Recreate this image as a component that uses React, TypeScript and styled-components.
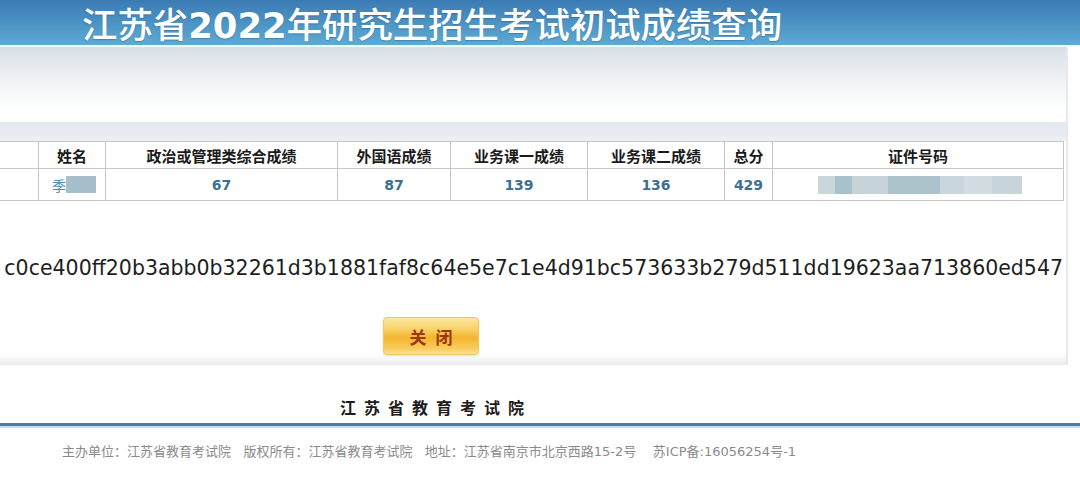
import React from 'react';
import styled, {createGlobalStyle} from 'styled-components';

const GlobalStyle = createGlobalStyle`
  html, body {
    margin: 0;
    padding: 0;
    background: #fff;
    overflow: hidden;
  }
  body {
    width: 1080px;
    font-family: "DejaVu Sans", "Noto Sans CJK SC", sans-serif;
  }
`

const headers = ['', '姓名', '政治或管理类综合成绩', '外国语成绩', '业务课一成绩', '业务课二成绩', '总分', '证件号码']
const widths = [68, 67, 232, 113, 137, 137, 48, 291]
const scores = ['67', '87', '139', '136', '429']

// blurred id number, pieces of different shades
const idBlur = [
    {w: 17, c: '#c9d7dd'},
    {w: 17, c: '#a9c1c8'},
    {w: 36, c: '#c6d4da'},
    {w: 52, c: '#abc3ca'},
    {w: 24, c: '#c9d7dc'},
    {w: 28, c: '#d2dde2'},
    {w: 30, c: '#c7d5da'},
]

const hash = 'c0ce400ff20b3abb0b32261d3b1881faf8c64e5e7c1e4d91bc573633b279d511dd19623aa713860ed547'

const App = () => {
    return (
        <Page>
            <GlobalStyle/>
            <Header>
                <Title>江苏省<Year>2022</Year>年研究生招生考试初试成绩查询</Title>
            </Header>

            <Panel>
                <TableArea>
                    <ScoreTable>
                        <colgroup>
                            {widths.map((w, i) => <col key={i} style={{width: w}}/>)}
                        </colgroup>
                        <thead>
                        <tr>
                            {headers.map((h, i) => <HeadCell key={i}>{h}</HeadCell>)}
                        </tr>
                        </thead>
                        <tbody>
                        <tr>
                            <DataCell/>
                            <DataCell>
                                <Name>季<NameBlur/></Name>
                            </DataCell>
                            {scores.map((s, i) => <DataCell key={i}>{s}</DataCell>)}
                            <DataCell>
                                <IdBlur>
                                    {idBlur.map((b, i) => <BlurPiece key={i} $w={b.w} $c={b.c}/>)}
                                </IdBlur>
                            </DataCell>
                        </tr>
                        </tbody>
                    </ScoreTable>
                </TableArea>

                <HashLine><span>{hash}</span></HashLine>

                <ButtonRow>
                    <CloseButton>关闭</CloseButton>
                </ButtonRow>
            </Panel>

            <OrgName>江苏省教育考试院</OrgName>
            <Rule/>
            <Footer>
                主办单位：江苏省教育考试院&nbsp;&nbsp;&nbsp;版权所有：江苏省教育考试院&nbsp;&nbsp;&nbsp;地址：江苏省南京市北京西路15-2号&nbsp;&nbsp;&nbsp;&nbsp;苏ICP备:16056254号-1
            </Footer>
        </Page>
    );
};

const Page = styled.div`
  width: 1080px;
  height: 483px;
  overflow: hidden;
`

const Header = styled.div`
  height: 47px;
  padding: 6px 0 0 82px;
  box-sizing: border-box;
  background: linear-gradient(to bottom, #3b7bb4 0%, #4b93c4 50%, #5eabd2 100%);
  border-bottom: 2px solid #f4fbfe;
  display: flex;
  align-items: center;
`

const Title = styled.h1`
  margin: 0;
  font-family: "DejaVu Sans", "Noto Sans CJK SC", sans-serif;
  font-size: 35.4px;
  font-weight: 500;
  line-height: 41px;
  color: #fff;
  white-space: nowrap;
  text-shadow: 0 1px 1px rgba(30, 70, 110, 0.35);
`

const Year = styled.span`
  font-weight: 700;
`

const Panel = styled.div`
  margin-left: -40px;
  width: 1108px;
  height: 318px;
  box-sizing: border-box;
  padding-top: 75px;
  border-right: 2px solid #e6e8eb;
  background: linear-gradient(to top, #e9ebed 0px, #fafafa 8px, rgba(255, 255, 255, 0) 14px),
  linear-gradient(to bottom, #d9dfe7 0px, #eef1f4 30px, #ffffff 64px);
`

const TableArea = styled.div`
  padding: 19px 3px 0 10px;
  background: linear-gradient(to bottom, #e3e8ef, #ebeff4) top left / 100% 19px no-repeat;
`

const ScoreTable = styled.table`
  width: 1093px;
  table-layout: fixed;
  border-collapse: collapse;
  background: #fff;
`

const HeadCell = styled.th`
  height: 26px;
  padding: 0;
  border: 1px solid #c6c6c6;
  font-family: "Noto Sans CJK SC", sans-serif;
  font-size: 15px;
  font-weight: 700;
  color: #1a1a1a;
  text-align: center;
  white-space: nowrap;
`

const DataCell = styled.td`
  height: 31px;
  padding: 0;
  border: 1px solid #c6c6c6;
  font-family: "DejaVu Sans", sans-serif;
  font-size: 14px;
  font-weight: 700;
  color: #3d7090;
  text-align: center;
`

const Name = styled.span`
  display: inline-flex;
  align-items: center;
  font-family: "Noto Sans CJK SC", sans-serif;
  font-weight: 400;
  font-size: 14px;
  color: #4f8aa8;
  margin-left: 4px;
`

const NameBlur = styled.span`
  display: inline-block;
  width: 30px;
  height: 17px;
  background: #a7bfcb;
`

const IdBlur = styled.div`
  display: flex;
  margin-left: 45px;
  height: 18px;
`

const BlurPiece = styled.span<{ $w: number; $c: string }>`
  width: ${p => p.$w}px;
  background: ${p => p.$c};
`

const HashLine = styled.div`
  margin-top: 55px;
  padding-right: 3px;
  display: flex;
  justify-content: flex-end;
  overflow: hidden;
  font-family: "DejaVu Sans", sans-serif;
  font-size: 20.5px;
  line-height: 24px;
  color: #1e1e1e;
  white-space: nowrap;

  span {
    flex-shrink: 0;
  }
`

const ButtonRow = styled.div`
  margin-top: 37px;
  padding-left: 423px;
  display: flex;
`

const CloseButton = styled.button`
  width: 96px;
  height: 38px;
  padding: 0 0 0 9px;
  border: 1px solid #efc765;
  border-radius: 4px;
  background: linear-gradient(to bottom, #fde7a0 0%, #f9d26a 30%, #f3b52f 55%, #f8cd5e 85%, #fbe09a 100%);
  font-family: "Noto Sans CJK SC", sans-serif;
  font-size: 17px;
  font-weight: 700;
  letter-spacing: 9px;
  color: #9b3812;
  cursor: pointer;
  box-shadow: 0 1px 2px rgba(180, 130, 40, 0.25);
`

const OrgName = styled.div`
  margin-top: 32px;
  padding-left: 340px;
  font-family: "Noto Sans CJK SC", sans-serif;
  font-size: 16px;
  font-weight: 700;
  line-height: 20px;
  letter-spacing: 8px;
  color: #1c1c1c;
`

const Rule = styled.div`
  margin-top: 6px;
  height: 3px;
  background: #4b7fa3;
  border-bottom: 2px solid #bfe0ee;
`

const Footer = styled.div`
  margin-top: 15px;
  padding-left: 62px;
  font-family: "DejaVu Sans", "Noto Sans CJK SC", sans-serif;
  font-size: 13px;
  line-height: 18px;
  color: #8a8a8a;
  white-space: nowrap;
`

export default App;
